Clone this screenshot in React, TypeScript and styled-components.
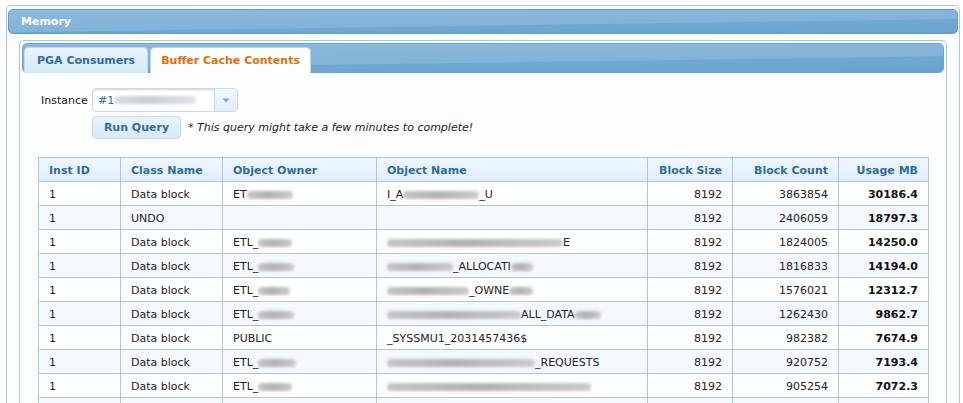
import React from 'react';
import styled, {createGlobalStyle} from 'styled-components';

type Part = string | {blur: number};

interface CacheRow {
  instId: number;
  className: string;
  owner: Part[];
  objectName: Part[];
  blockSize: number;
  blockCount: number;
  usageMb: string;
}

const rows: CacheRow[] = [
  {instId: 1, className: 'Data block', owner: ['ET', {blur: 46}], objectName: ['I_A', {blur: 76}, '_U'], blockSize: 8192, blockCount: 3863854, usageMb: '30186.4'},
  {instId: 1, className: 'UNDO', owner: [], objectName: [], blockSize: 8192, blockCount: 2406059, usageMb: '18797.3'},
  {instId: 1, className: 'Data block', owner: ['ETL_', {blur: 34}], objectName: [{blur: 176}, 'E'], blockSize: 8192, blockCount: 1824005, usageMb: '14250.0'},
  {instId: 1, className: 'Data block', owner: ['ETL_', {blur: 36}], objectName: [{blur: 66}, '_ALLOCATI', {blur: 22}], blockSize: 8192, blockCount: 1816833, usageMb: '14194.0'},
  {instId: 1, className: 'Data block', owner: ['ETL_', {blur: 32}], objectName: [{blur: 82}, '_OWNE', {blur: 24}], blockSize: 8192, blockCount: 1576021, usageMb: '12312.7'},
  {instId: 1, className: 'Data block', owner: ['ETL_', {blur: 36}], objectName: [{blur: 134}, 'ALL_DATA', {blur: 26}], blockSize: 8192, blockCount: 1262430, usageMb: '9862.7'},
  {instId: 1, className: 'Data block', owner: ['PUBLIC'], objectName: ['_SYSSMU1_2031457436$'], blockSize: 8192, blockCount: 982382, usageMb: '7674.9'},
  {instId: 1, className: 'Data block', owner: ['ETL_', {blur: 38}], objectName: [{blur: 148}, '_REQUESTS'], blockSize: 8192, blockCount: 920752, usageMb: '7193.4'},
  {instId: 1, className: 'Data block', owner: ['ETL_', {blur: 34}], objectName: [{blur: 204}], blockSize: 8192, blockCount: 905254, usageMb: '7072.3'},
  {instId: 1, className: 'Data block', owner: ['ETL_', {blur: 30}], objectName: [{blur: 150}], blockSize: 8192, blockCount: 871140, usageMb: '6805.8'},
];

const GlobalStyle = createGlobalStyle`
  html, body {
    margin: 0;
    padding: 0;
    overflow: hidden;
    background: #fff;
  }
  body {
    font-family: "DejaVu Sans", Verdana, sans-serif;
    font-size: 11px;
    color: #222;
  }
`;

const Portlet = styled.div`
  box-sizing: border-box;
  width: 954px;
  height: 440px;
  margin: 5px 0 0 6px;
  padding: 3px 1px 0 1px;
  border: 1px solid #a6c9e2;
  border-radius: 5px;
  background: #fcfdfd;
`;

const glossWave = `
  background: linear-gradient(179.2deg, #8dbadd 0%, #82b3d9 60%, #70a8d3 63%, #69a2cf 100%);
`;

const PortletHeader = styled.div`
  box-sizing: border-box;
  height: 25px;
  padding: 0 12px;
  border: 1px solid #5d9dd0;
  border-radius: 5px;
  ${glossWave}
  color: #fff;
  font-weight: bold;
  line-height: 24px;
`;

const Tabs = styled.div`
  box-sizing: border-box;
  height: 420px;
  margin: 6px 11px 0 11px;
  padding: 2px;
  border: 1px solid #a6c9e2;
  border-radius: 5px;
  background: #fcfdfd;
`;

const TabBar = styled.div`
  box-sizing: border-box;
  display: flex;
  align-items: flex-end;
  gap: 2px;
  height: 30px;
  padding: 0 1px;
  border: 1px solid #6aa5d3;
  border-radius: 5px;
  ${glossWave}
`;

const Tab = styled.div<{$active?: boolean}>`
  box-sizing: border-box;
  height: 26px;
  margin-bottom: -1px;
  padding: 0 ${({$active}) => ($active ? 10 : 12)}px;
  border: 1px solid ${({$active}) => ($active ? '#b9d5ec' : '#c5dbec')};
  border-bottom: 0;
  border-radius: 5px 5px 0 0;
  background: ${({$active}) => ($active ? '#fcfdfd' : 'linear-gradient(#e9f3fc, #d7e9f8)')};
  color: ${({$active}) => ($active ? '#e17009' : '#2e6e9e')};
  font-weight: bold;
  line-height: 25px;
  white-space: nowrap;
`;

const TabPanel = styled.div`
  padding: 15px 15px 0 16px;
`;

const QueryForm = styled.div`
  display: grid;
  grid-template-columns: 51px auto;
  row-gap: 4px;
  align-items: center;
  margin-left: 3px;
`;

const Label = styled.label`
  color: #222;
`;

const Select = styled.div`
  box-sizing: border-box;
  display: flex;
  width: 146px;
  height: 24px;
  border: 1px solid #c5dbec;
  border-radius: 4px;
  background: #fff;
  box-shadow: inset 0 2px 2px -1px rgba(0, 0, 0, 0.18);
  overflow: hidden;
`;

const SelectValue = styled.div`
  flex: 1;
  display: flex;
  align-items: center;
  padding-left: 5px;
  color: #2e6e9e;
`;

const SelectArrow = styled.div`
  display: flex;
  align-items: center;
  justify-content: center;
  width: 22px;
  border-left: 1px solid #c5dbec;
  background: linear-gradient(#f1f7fd, #e2eefa);
`;

const ActionRow = styled.div`
  display: flex;
  align-items: center;
  gap: 7px;
`;

const Button = styled.button`
  box-sizing: border-box;
  width: 89px;
  height: 23px;
  padding: 0;
  border: 1px solid #c5dbec;
  border-radius: 4px;
  background: linear-gradient(#e9f3fc, #d9e9f8);
  color: #2e6e9e;
  font-family: inherit;
  font-size: 11px;
  font-weight: bold;
`;

const Note = styled.span`
  font-style: italic;
  color: #222;
`;

const Table = styled.table`
  width: 100%;
  margin-top: 18px;
  border-collapse: collapse;
  table-layout: fixed;
  border: 1px solid #a6c9e2;
`;

const Th = styled.th<{$num?: boolean}>`
  height: 22px;
  padding: 1px 10px 0;
  border: 1px solid #a6c9e2;
  background: linear-gradient(#f0f7fe, #dfedfa);
  color: #2e6e9e;
  font-weight: bold;
  text-align: ${({$num}) => ($num ? 'right' : 'left')};
  white-space: nowrap;
`;

const Tr = styled.tr<{$alt?: boolean}>`
  background: ${({$alt}) => ($alt ? '#f5f9fe' : '#fff')};
`;

const Td = styled.td<{$num?: boolean; $strong?: boolean}>`
  height: 21px;
  padding: 2px 10px 0;
  border: 1px solid #a6c9e2;
  text-align: ${({$num}) => ($num ? 'right' : 'left')};
  font-weight: ${({$strong}) => ($strong ? 'bold' : 'normal')};
  color: ${({$strong}) => ($strong ? '#111' : '#222')};
  white-space: nowrap;
  overflow: hidden;
`;

// masked text: a soft grey smear in place of the hidden characters
const Smudge = styled.span<{$w: number; $light?: boolean}>`
  display: inline-block;
  width: ${({$w}) => $w}px;
  height: 8px;
  vertical-align: -1px;
  border-radius: 4px;
  background: ${({$light}) =>
    $light
      ? 'linear-gradient(90deg, #d9dde2, #c9ced4 40%, #dfe2e6)'
      : 'linear-gradient(90deg, #c4c4c4, #b2b2b2 45%, #cacaca)'};
  filter: blur(1.6px);
`;

const Masked = ({parts}: {parts: Part[]}) => (
  <>
    {parts.map((p, i) =>
      typeof p === 'string' ? <span key={i}>{p}</span> : <Smudge key={i} $w={p.blur}/>
    )}
  </>
);

const columns = [
  {title: 'Inst ID', width: 82},
  {title: 'Class Name', width: 102},
  {title: 'Object Owner', width: 154},
  {title: 'Object Name', width: 271},
  {title: 'Block Size', width: 85, num: true},
  {title: 'Block Count', width: 106, num: true},
  {title: 'Usage MB', width: 90, num: true},
];

export default function App() {
  return (
    <>
      <GlobalStyle/>
      <Portlet>
        <PortletHeader>Memory</PortletHeader>
        <Tabs>
          <TabBar>
            <Tab>PGA Consumers</Tab>
            <Tab $active>Buffer Cache Contents</Tab>
          </TabBar>
          <TabPanel>
            <QueryForm>
              <Label>Instance</Label>
              <Select>
                <SelectValue>
                  #1<Smudge $w={82} $light/>
                </SelectValue>
                <SelectArrow>
                  <svg width="8" height="5" viewBox="0 0 8 5">
                    <path d="M0.5 0.5h7L4 4.5z" fill="#7aa6cf"/>
                  </svg>
                </SelectArrow>
              </Select>
              <span/>
              <ActionRow>
                <Button>Run Query</Button>
                <Note>* This query might take a few minutes to complete!</Note>
              </ActionRow>
            </QueryForm>
            <Table>
              <colgroup>
                {columns.map((c) => <col key={c.title} style={{width: c.width}}/>)}
              </colgroup>
              <thead>
                <tr>
                  {columns.map((c) => <Th key={c.title} $num={c.num}>{c.title}</Th>)}
                </tr>
              </thead>
              <tbody>
                {rows.map((r, i) => (
                  <Tr key={i} $alt={i % 2 === 1}>
                    <Td>{r.instId}</Td>
                    <Td>{r.className}</Td>
                    <Td><Masked parts={r.owner}/></Td>
                    <Td><Masked parts={r.objectName}/></Td>
                    <Td $num>{r.blockSize}</Td>
                    <Td $num>{r.blockCount}</Td>
                    <Td $num $strong>{r.usageMb}</Td>
                  </Tr>
                ))}
              </tbody>
            </Table>
          </TabPanel>
        </Tabs>
      </Portlet>
    </>
  );
}
